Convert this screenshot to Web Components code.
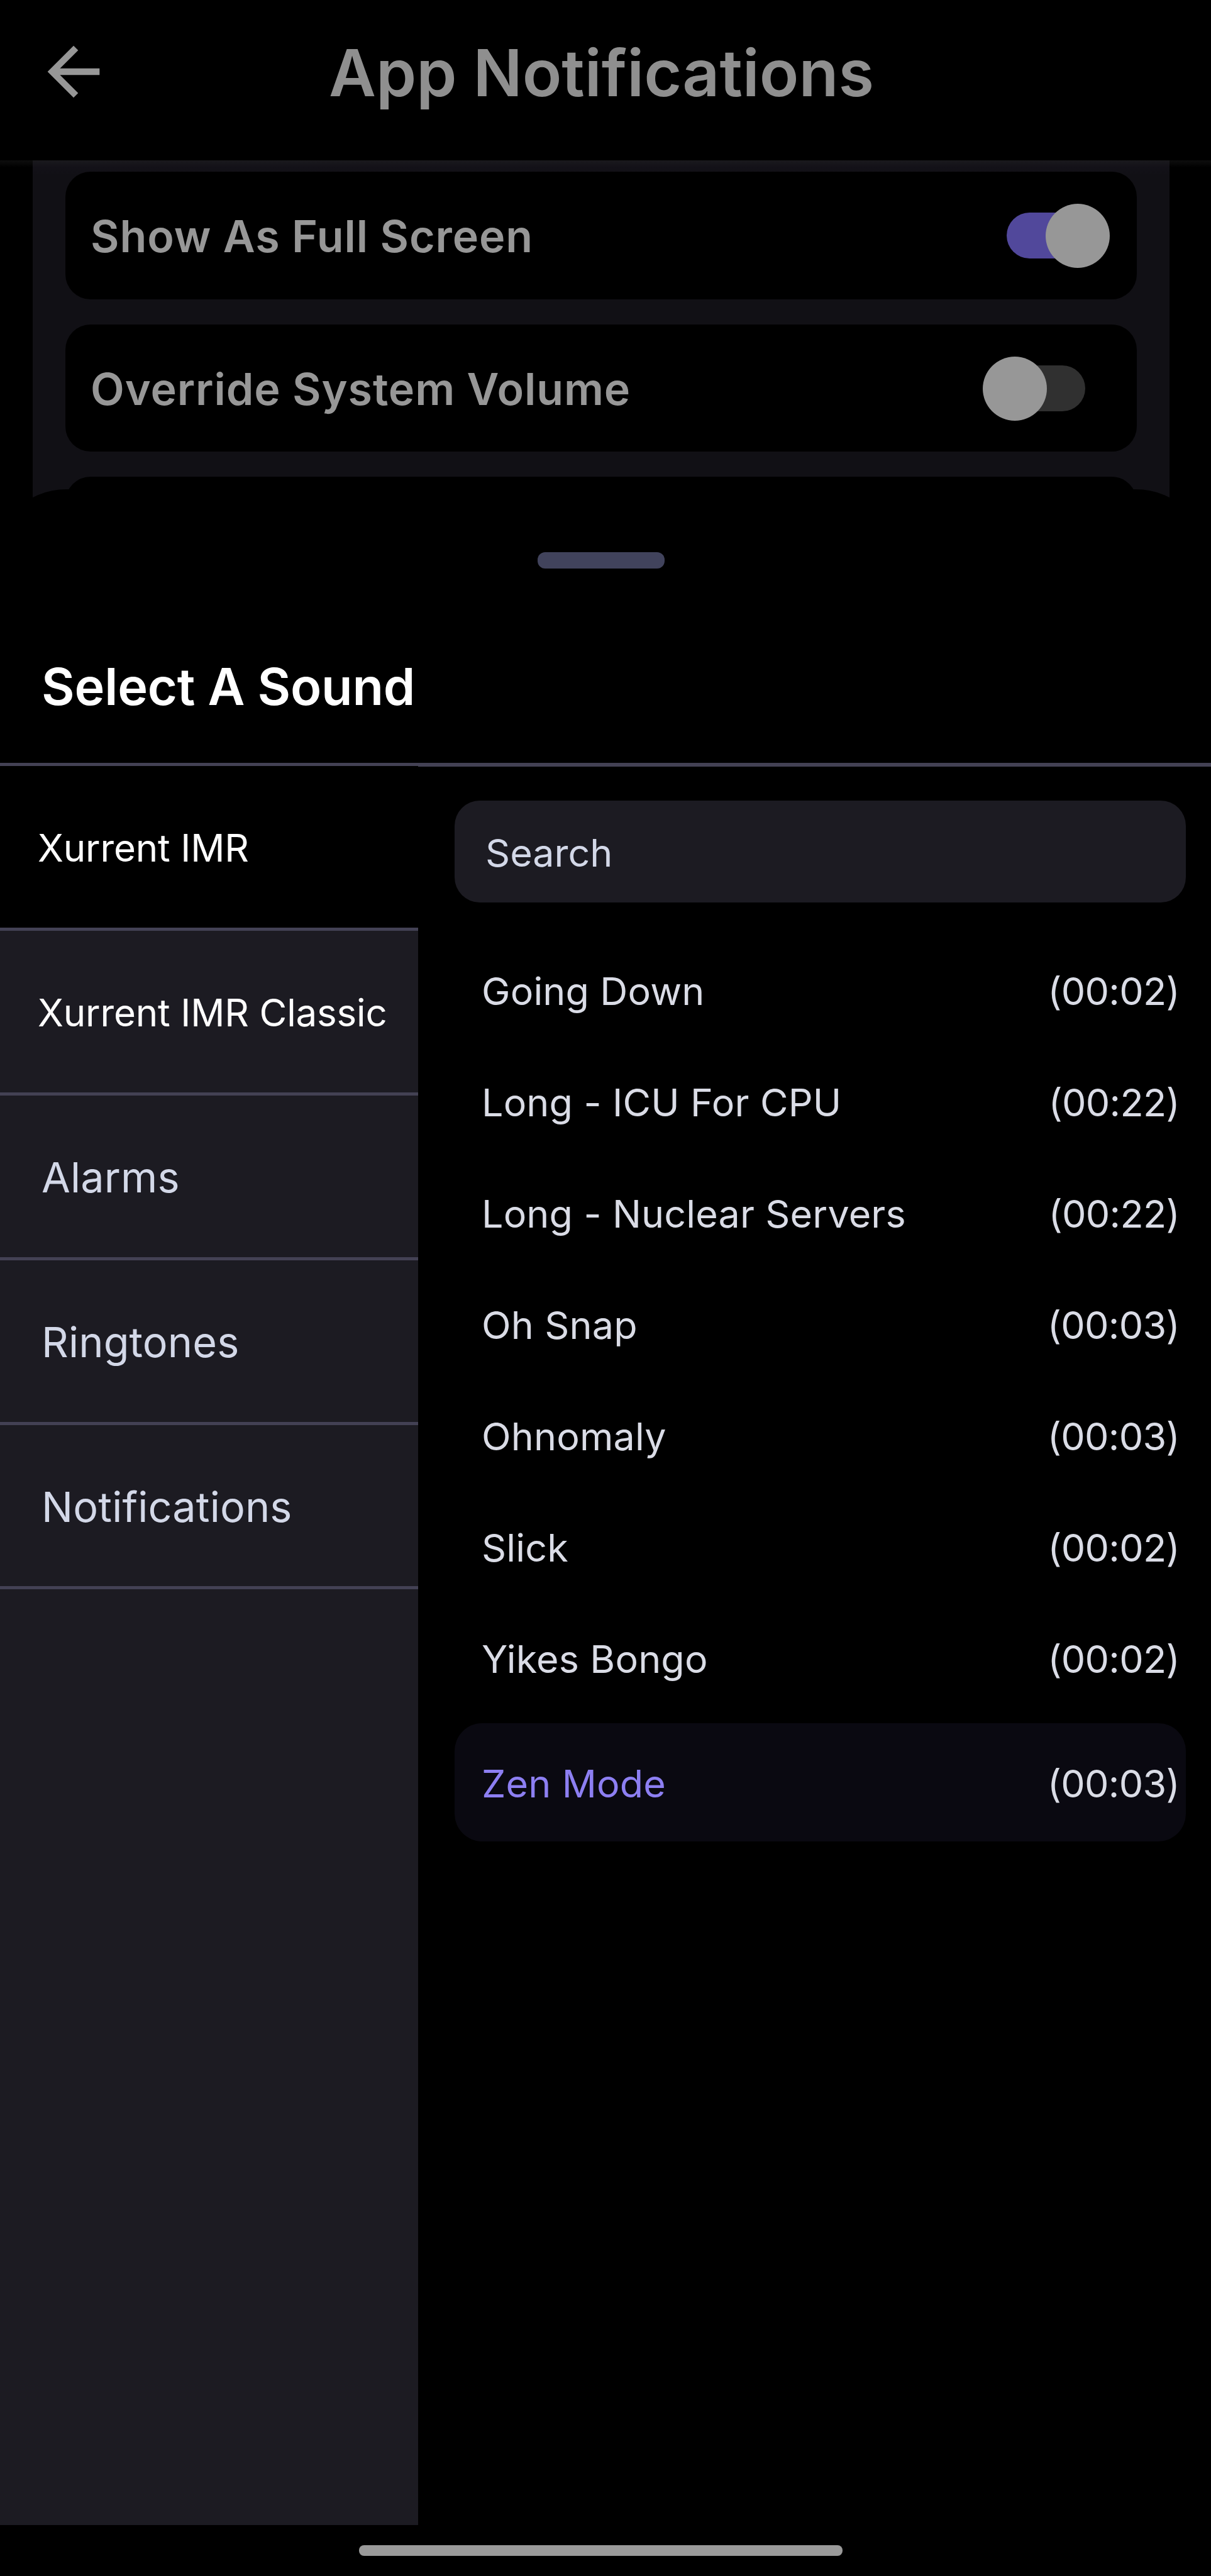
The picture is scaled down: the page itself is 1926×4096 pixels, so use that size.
<!DOCTYPE html>
<html lang="en">
<head>
<meta charset="utf-8">
<title>App Notifications</title>
<style>
  html, body {
    margin: 0;
    background: #000;
  }
  body {
    width: 1926px;
    height: 4096px;
    overflow: hidden;
    font-family: Inter, "Liberation Sans", sans-serif;
  }
</style>
</head>
<body>
<app-screen>
  <app-header slot="header">App Notifications</app-header>
  <settings-panel slot="settings">
    <setting-card>Show As Full Screen<toggle-switch slot="control" on></toggle-switch></setting-card>
    <setting-card>Override System Volume<toggle-switch slot="control"></toggle-switch></setting-card>
    <setting-card></setting-card>
  </settings-panel>
  <bottom-sheet slot="sheet">
    <span slot="title">Select A Sound</span>
    <category-item slot="categories" selected>Xurrent IMR</category-item>
    <category-item slot="categories" branded>Xurrent IMR Classic</category-item>
    <category-item slot="categories">Alarms</category-item>
    <category-item slot="categories">Ringtones</category-item>
    <category-item slot="categories">Notifications</category-item>
    <search-field>Search</search-field>
    <sound-list></sound-list>
  </bottom-sheet>
</app-screen>

<script>
// Attach an open shadow root holding the given markup
const render = (el, html) => {
  el.attachShadow({ mode: 'open' }).innerHTML = html;
};

// Screen
class AppScreen extends HTMLElement {
  constructor() {
    super();
    render(this, `
<style>
  :host {
    display: flex;
    flex-direction: column;
    width: 1926px;
    height: 4096px;
    overflow: hidden;
    background: #000;
  }
  .home {
    flex: 1;
    display: flex;
    justify-content: center;
    padding: 32px 16px 0 0;
  }
  .home i {
    width: 769px;
    height: 17px;
    border-radius: 8px;
    background: #9a9a9a;
  }
</style>
<slot name="header"></slot>
<slot name="settings"></slot>
<slot name="sheet"></slot>
<div class="home"><i></i></div>`);
  }
}

// Top bar with the back arrow
class AppHeader extends HTMLElement {
  constructor() {
    super();
    render(this, `
<style>
  :host {
    display: flex;
    align-items: center;
    box-sizing: border-box;
    height: 255px;
    padding: 0 0 24px 55px;
    flex: none;
  }
  svg {
    width: 124px;
    height: 124px;
    margin-bottom: 4px;
    fill: #979797;
  }
  h1 {
    margin: 0 0 0 344px;
    color: #8f8f8f;
    font-size: 103px;
    font-weight: 600;
    line-height: 124px;
    white-space: nowrap;
  }
</style>
<svg viewBox="0 0 24 24"><path d="M20 11H7.83l5.59-5.59L12 4l-8 8 8 8 1.41-1.41L7.83 13H20v-2z"/></svg>
<h1><slot></slot></h1>`);
  }
}

// Dimmed settings behind the sheet
class SettingsPanel extends HTMLElement {
  constructor() {
    super();
    render(this, `
<style>
  :host {
    display: block;
    flex: none;
    height: 565px;
    overflow: hidden;
    background: linear-gradient(#0e0e0e, #000 11px);
  }
  .list {
    display: flex;
    flex-direction: column;
    gap: 40px;
    width: 1704px;
    height: 600px;
    margin-left: 52px;
    padding: 18px 52px 0;
    background: linear-gradient(#1a191d, #131118 11px, #111015 24px);
  }
</style>
<div class="list"><slot></slot></div>`);
  }
}

class SettingCard extends HTMLElement {
  constructor() {
    super();
    render(this, `
<style>
  :host {
    display: flex;
    align-items: center;
    justify-content: space-between;
    box-sizing: border-box;
    flex: none;
    height: 202.7px;
    padding: 3px 43px 0 40px;
    border-radius: 40px;
    background: #000;
    color: #979797;
    font-size: 70px;
    font-weight: 600;
    letter-spacing: .9px;
    white-space: nowrap;
  }
</style>
<span><slot></slot></span>
<slot name="control"></slot>`);
  }
}

class ToggleSwitch extends HTMLElement {
  constructor() {
    super();
    render(this, `
<style>
  :host {
    display: flex;
    align-items: center;
    width: 125px;
    height: 73px;
    margin: 0 39px 2px 0;
    border-radius: 37px;
    background: #303030;
  }
  :host([on]) {
    background: #51489b;
  }
  i {
    flex: none;
    width: 102px;
    height: 102px;
    margin-left: -38px;
    border-radius: 50%;
    background: #979797;
  }
  :host([on]) i {
    margin-left: 62px;
  }
</style>
<i></i>`);
  }
}

// Bottom sheet: drag handle, title, category column and sound column
class BottomSheet extends HTMLElement {
  constructor() {
    super();
    render(this, `
<style>
  :host {
    display: flex;
    flex-direction: column;
    flex: none;
    box-sizing: border-box;
    position: relative;
    width: 1940px;
    height: 3237px;
    margin: -42px 0 0 -14px;
    padding: 100px 0 0 14px;
    border-radius: 120px 120px 0 0;
    background: #000;
  }
  .handle {
    flex: none;
    width: 202px;
    height: 26px;
    margin-left: 855px;
    border-radius: 12px;
    background: #41435c;
  }
  h2 {
    display: flex;
    align-items: center;
    box-sizing: border-box;
    flex: none;
    height: 309px;
    margin: 0;
    padding: 67px 0 0 66px;
    color: #fff;
    font-size: 81px;
    font-weight: 600;
    letter-spacing: -.2px;
    white-space: nowrap;
  }
  .body {
    display: flex;
    flex: 1;
  }
  nav {
    width: 665px;
    border-top: 5px solid #434154;
    background: #1c1b22;
  }
  main {
    display: flex;
    flex-direction: column;
    flex: 1;
    padding: 54px 40px 0 58px;
    border-top: 6px solid #434154;
  }
</style>
<div class="handle"></div>
<h2><slot name="title"></slot></h2>
<div class="body">
  <nav><slot name="categories"></slot></nav>
  <main><slot></slot></main>
</div>`);
  }
}

class CategoryItem extends HTMLElement {
  constructor() {
    super();
    render(this, `
<style>
  :host {
    display: flex;
    align-items: center;
    box-sizing: border-box;
    height: 261.9px;
    padding: 4px 0 0 66px;
    border-bottom: 5px solid #434154;
    color: #d3d8e8;
    font-size: 66.5px;
    letter-spacing: .15px;
    white-space: nowrap;
  }
  :host([selected]), :host([branded]) {
    padding-left: 60px;
    color: #fff;
    font-size: 60px;
    letter-spacing: -.15px;
  }
  :host([selected]) {
    background: #000;
  }
</style>
<slot></slot>`);
  }
}

class SearchField extends HTMLElement {
  constructor() {
    super();
    render(this, `
<style>
  :host {
    display: flex;
    align-items: center;
    box-sizing: border-box;
    height: 162px;
    padding: 3px 0 0 49px;
    border-radius: 40px;
    background: #1c1b22;
    color: #d3d8e8;
    font-size: 61px;
  }
</style>
<slot></slot>`);
  }
}

// Sounds
const sounds = [
  { name: 'Going Down', time: '00:02' },
  { name: 'Long - ICU For CPU', time: '00:22' },
  { name: 'Long - Nuclear Servers', time: '00:22' },
  { name: 'Oh Snap', time: '00:03' },
  { name: 'Ohnomaly', time: '00:03' },
  { name: 'Slick', time: '00:02' },
  { name: 'Yikes Bongo', time: '00:02' },
  { name: 'Zen Mode', time: '00:03', selected: true }
];

class SoundRow extends HTMLElement {
  constructor() {
    super();
    render(this, `
<style>
  :host {
    display: flex;
    align-items: center;
    justify-content: space-between;
    box-sizing: border-box;
    height: 176.9px;
    padding: 0 10px 0 43px;
    color: #dadce6;
    font-size: 61px;
    white-space: nowrap;
  }
  :host([selected]) {
    height: 188px;
    margin-top: 14px;
    padding-top: 3px;
    border-radius: 44px;
    background: #0a0911;
  }
  /* keeps the hyphen at its lowercase height */
  .name {
    font-feature-settings: "calt" 0;
    letter-spacing: .15px;
  }
  .time {
    letter-spacing: -.7px;
  }
  :host([selected]) .name {
    color: #8d7ff2;
  }
</style>
<span class="name"><slot></slot></span>
<span class="time"><slot name="time"></slot></span>`);
  }
}

class SoundList extends HTMLElement {
  constructor() {
    super();
    render(this, `
<style>
  :host {
    display: block;
    margin-top: 53px;
  }
</style>`);
  }

  connectedCallback() {
    for (const s of sounds) {
      const row = document.createElement('sound-row');
      row.textContent = s.name;
      if (s.selected) row.setAttribute('selected', '');
      const time = document.createElement('span');
      time.slot = 'time';
      time.textContent = `(${s.time})`;
      row.appendChild(time);
      this.shadowRoot.appendChild(row);
    }
  }
}

customElements.define('app-screen', AppScreen);
customElements.define('app-header', AppHeader);
customElements.define('settings-panel', SettingsPanel);
customElements.define('setting-card', SettingCard);
customElements.define('toggle-switch', ToggleSwitch);
customElements.define('bottom-sheet', BottomSheet);
customElements.define('category-item', CategoryItem);
customElements.define('search-field', SearchField);
customElements.define('sound-row', SoundRow);
customElements.define('sound-list', SoundList);
</script>
</body>
</html>
